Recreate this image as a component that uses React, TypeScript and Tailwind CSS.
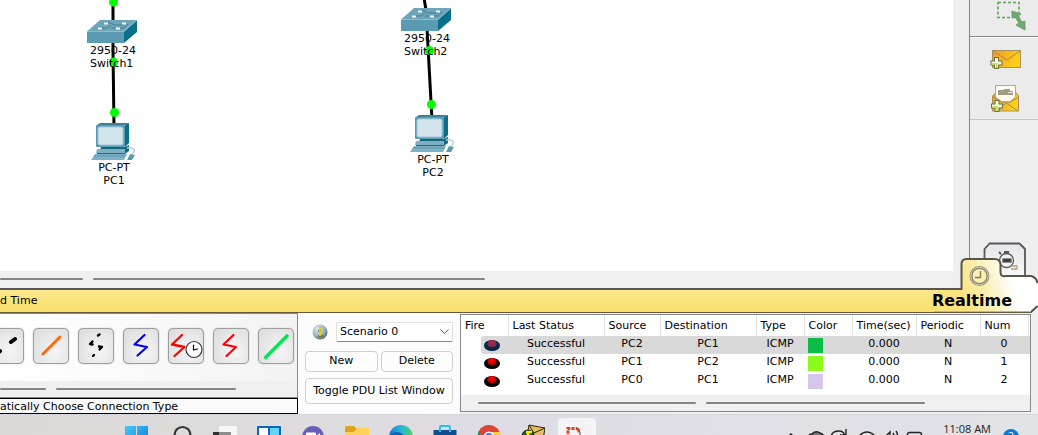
import type { ReactNode } from "react";

type Segment = { width: string };

function ScrollStrip({ lead, segments }: { lead: string; segments: Segment[] }) {
  return (
    <div className={`flex h-4 shrink-0 items-center gap-2.5 overflow-hidden bg-[#f0f0f0] ${lead}`}>
      {segments.map((s, i) => (
        <div key={i} className={`h-0.5 shrink-0 rounded-full bg-[#858585] ${s.width}`} />
      ))}
    </div>
  );
}

function SwitchIcon() {
  return (
    <svg width="50" height="25" viewBox="0 0 50 25" className="block">
      <path d="M0 12.500L13 1h37L37 12.500z" fill="#6fa5b9" />
      <path d="M0 12.500h37V24H0z" fill="#5b9ab3" />
      <path d="M37 12.500L50 1v12L37 24z" fill="#0b6f8a" />
      <path d="M0 12.500h37L50 1" fill="none" stroke="#8fbccb" strokeWidth="1" />
      <path d="M17 4h7l3 2h11M12 9h8l4-3M30 9h7l4-4M24 9l4 0" fill="none" stroke="#3f7f95" strokeWidth="1" />
      <path d="M17 4.500h4M11 9.500h4M29 9.500h4M35 4.500h4" fill="none" stroke="#f3fafc" strokeWidth="2" />
    </svg>
  );
}

function PcIcon() {
  return (
    <svg width="46" height="38" viewBox="0 0 46 38" className="block">
      <path d="M6 2L9 0h29l-4 2z" fill="#3b8198" />
      <path d="M34 2l4-2v20l-4 4z" fill="#0b6f8a" />
      <rect x="5" y="2" width="29" height="22" rx="1" fill="#5b9ab3" />
      <rect x="7" y="4" width="25" height="18" rx="2" fill="#d3e4ec" stroke="#a6cad8" />
      <path d="M10 24h24l4-2v2l-4 3H9z" fill="#19647c" />
      <path d="M6 26h28v4H5z" fill="#7db0c2" />
      <path d="M34 26l4-2v4l-4 3H6v-1h28z" fill="#0b6f8a" />
      <path d="M4 31h32l-3 6H0z" fill="#7fb0c3" />
      <path d="M3 33h31" stroke="#5b9ab3" />
      <path d="M36 25c8-1 9 3 5 6" fill="none" stroke="#b4ced9" strokeWidth="1.500" />
      <path d="M39 31l5 1-3 5h-5z" fill="#5b9ab3" />
    </svg>
  );
}

function SwitchNode({ place, name }: { place: string; name: string }) {
  return (
    <div className={`absolute flex w-[50px] flex-col leading-[13px] ${place}`}>
      <SwitchIcon />
      <span className="pl-[3px]">2950-24</span>
      <span className="pl-[3px]">{name}</span>
    </div>
  );
}

function PcNode({ place, name }: { place: string; name: string }) {
  return (
    <div className={`absolute flex w-[46px] flex-col text-center leading-[13px] ${place}`}>
      <PcIcon />
      <span>PC-PT</span>
      <span>{name}</span>
    </div>
  );
}

function Links() {
  return (
    <svg width="500" height="160" className="absolute left-0 top-0">
      <g stroke="#000" strokeWidth="3" fill="none">
        <path d="M113 0v50L114 128" />
        <path d="M424 -2L426 10L432 120" />
      </g>
      <g fill="#00ff00">
        <circle cx="113.500" cy="2" r="4.500" />
        <circle cx="113.500" cy="62" r="4.500" />
        <circle cx="114.500" cy="112.500" r="4.500" />
        <circle cx="429.500" cy="50.500" r="4.500" />
        <circle cx="431.500" cy="104.500" r="4.500" />
      </g>
    </svg>
  );
}

function Plus() {
  return (
    <>
      <path d="M12 9v12M6 15h12" stroke="#6b7040" strokeWidth="5" />
      <path d="M12 10v10M7 15h10" stroke="#f6f9d8" strokeWidth="3" />
      <path d="M12 15v5M7 16h5" stroke="#c0dc4a" strokeWidth="1.500" />
    </>
  );
}

function SideToolbar() {
  return (
    <aside className="flex w-[69px] shrink-0 flex-col border-l border-[#80808c] bg-[#efefef]">
      <div className="flex h-[37px] justify-center border-b border-[#8c8c8c] bg-[#ebebeb]">
        <button aria-label="Resize shape" className="flex h-8 w-10">
          <svg width="40" height="32" viewBox="0 0 40 32" className="overflow-visible">
            <rect x="14" y="2.500" width="21" height="15" fill="none" stroke="#5ea351" strokeWidth="1.600" strokeDasharray="3 2" />
            <path d="M28 11l9 3-3 2 4 6 3-1v9l-9-5 3-2-4-6-3 1z" fill="#6bab6b" stroke="#7b9a78" />
          </svg>
        </button>
      </div>
      <div className="flex h-[83px] flex-col items-center border-y border-b-[#c4c4c4] border-t-white bg-[#ebebeb] pt-[9px]">
        <button aria-label="Add simple PDU" className="h-9 w-10">
          <svg width="40" height="36" viewBox="0 0 40 36">
            <defs>
              <linearGradient id="mail" x1="0" x2="1" y1="0" y2="0.300">
                <stop offset="0" stopColor="#f39a25" />
                <stop offset="1" stopColor="#fcd116" />
              </linearGradient>
            </defs>
            <rect x="8.500" y="3.500" width="28" height="17" fill="url(#mail)" stroke="#a69060" />
            <path d="M9 4l14 9L36 4" fill="none" stroke="#a88846" />
            <g transform="translate(0.500 1)"><Plus /></g>
          </svg>
        </button>
        <button aria-label="Add complex PDU" className="h-9 w-10">
          <svg width="40" height="36" viewBox="0 0 40 36">
            <path d="M8.500 13l4-4h19l3 4v15h-26z" fill="url(#mail)" stroke="#a69060" />
            <path d="M11.500 2.500h20V14l-6 5h-8l-6-5z" fill="#fffdf0" stroke="#b3aa8e" />
            <path d="M14 7h6V6h6v2h3v4H14z" fill="#a39b85" />
            <path d="M24 9.500h5" stroke="#e9e3cf" />
            <path d="M9 14l9 5h8l9-5M14 28l8-8 12 8" fill="none" stroke="#a88846" />
            <g transform="translate(1 8)"><Plus /></g>
          </svg>
        </button>
      </div>
    </aside>
  );
}

function ModeTabs() {
  return (
    <svg width="104" height="73" viewBox="0 0 104 73" className="absolute -bottom-px right-0">
      <defs>
        <linearGradient id="tab" gradientUnits="userSpaceOnUse" x1="24" y1="50" x2="76" y2="34">
          <stop offset="0" stopColor="#fae37c" />
          <stop offset="0.500" stopColor="#fcefb5" />
          <stop offset="1" stopColor="#ffffff" />
        </linearGradient>
        <linearGradient id="back" x1="0" x2="0" y1="0" y2="1">
          <stop offset="0" stopColor="#e6e6e6" />
          <stop offset="1" stopColor="#fafafa" />
        </linearGradient>
        <linearGradient id="fade" x1="0" x2="1" y1="0" y2="0">
          <stop offset="0" stopColor="#fae37c" stopOpacity="0" />
          <stop offset="0.250" stopColor="#fae37c" />
        </linearGradient>
      </defs>
      <path d="M94 48h10v25H94z" fill="#efefef" />
      <path d="M50.500 40V9l5-5.500h30l5.500 5.500v30z" fill="url(#back)" stroke="#57575b" strokeWidth="1.800" strokeLinejoin="round" />
      <g fill="none" stroke="#55565a" strokeWidth="1.300">
        <circle cx="72.500" cy="20.500" r="7" fill="#f4f4f4" />
        <path d="M70 12h5M67 14l-2-2" strokeWidth="2" />
        <rect x="69" y="19" width="8" height="3" fill="#333" />
        <path d="M77 29h6v-3h-6" stroke="#a9a57b" />
      </g>
      <path d="M0 49H28V72H0z" fill="url(#fade)" />
      <path
        d="M27 49.500V24q0-5 5-5H60.500q6 0 6 6v7q0 5 5 4H97q6 1 6.500 8V66l-7 6.500H27z"
        fill="url(#tab)"
      />
      <path
        d="M0 49H27.500V24q0-5 5-5H60.500q6 0 6 6v7q0 5 5 4H97q5 1 6.500 7M103.500 66l-7 6.500"
        fill="none"
        stroke="#57544b"
        strokeWidth="2"
      />
      <path d="M0 71.500h97" stroke="#dcb93e" strokeWidth="1" />
      <path d="M0 72.500h97" stroke="#67593a" strokeWidth="1" />
      <circle cx="45.500" cy="36" r="8.500" fill="#fcefb0" stroke="#85816f" strokeWidth="3" />
      <circle cx="45.500" cy="36" r="8.800" fill="none" stroke="#ddd8bc" strokeWidth="1" />
      <path d="M46.500 31v6.500H41" fill="none" stroke="#827c60" strokeWidth="1.400" />
    </svg>
  );
}

function ConnectionButton({ label, children }: { label: string; children: ReactNode }) {
  return (
    <button
      aria-label={label}
      className="size-9 shrink-0 rounded-[5px] border border-[#9d9d9d] bg-radial-[at_60%_65%] from-[#f6f6f6] to-[#dadada] shadow-[0_0_1px_#888]"
    >
      <svg width="34" height="34" viewBox="1 1 34 34" fill="none" strokeLinecap="round" strokeLinejoin="round">
        {children}
      </svg>
    </button>
  );
}

function ConnectionPanel() {
  return (
    <section className="flex w-[298px] shrink-0 flex-col">
      <div className="flex flex-1 flex-col border-r border-y border-[#86868b]">
        <div className="flex flex-1 items-center justify-end gap-[9px] overflow-hidden bg-linear-to-r from-white to-[#f3f3f3] pb-[3px] pr-[3px]">
          <ConnectionButton label="Copper cross-over">
            <path d="M23 14l4-3M9 26l3-3" stroke="#000" strokeWidth="4" />
          </ConnectionButton>
          <ConnectionButton label="Fiber">
            <path d="M10 26L27 9" stroke="#ff6a0a" strokeWidth="3" />
          </ConnectionButton>
          <ConnectionButton label="Phone">
            <path d="M20 7.500l1.500-1M14.500 13.500l-2.500 2.500 2.500 0.500M21 18.500l3 0.500-2.500 2.500M15 28l1-1" stroke="#000" strokeWidth="2.400" />
          </ConnectionButton>
          <ConnectionButton label="Coaxial">
            <path d="M21.500 7L11.500 16.500l12.500 2.500-9.500 8.500" stroke="#0000ff" strokeWidth="2.200" />
          </ConnectionButton>
          <ConnectionButton label="Serial DCE">
            <path d="M14 7L4 16.500l12.500 2.500L6.500 28" stroke="#ff0000" strokeWidth="2.300" />
            <circle cx="26" cy="21.500" r="8" fill="#fff" stroke="#333" strokeWidth="1.200" />
            <path d="M25.500 17v5l4-1" stroke="#000" strokeWidth="1.200" />
          </ConnectionButton>
          <ConnectionButton label="Serial DTE">
            <path d="M20.500 7L10.500 16.500l12.500 2.500-9.500 9" stroke="#ff0000" strokeWidth="2.200" />
          </ConnectionButton>
          <ConnectionButton label="Octal">
            <path d="M7.500 29.500L29 8" stroke="#10e060" strokeWidth="3.600" />
          </ConnectionButton>
        </div>
        <ScrollStrip lead="" segments={[{ width: "w-[46px]" }, { width: "w-[180px]" }]} />
      </div>
      <div className="h-4 overflow-hidden whitespace-nowrap border border-l-0 border-black bg-[#fafafa] leading-4">
        atically Choose Connection Type
      </div>
    </section>
  );
}

const CONTROL = "rounded-[4px] border border-[#cfcfcf] bg-[#fdfdfd]";

function ScenarioPanel() {
  return (
    <section className="flex w-[162px] shrink-0 flex-col bg-[#fcfcfc] px-[7px] pt-[9px]">
      <div className="flex items-center gap-2">
        <button aria-label="Scenario description" className="ml-[7px] size-4 shrink-0">
          <svg width="16" height="16" viewBox="0 0 16 16">
            <defs>
              <radialGradient id="info" cx="0.350" cy="0.300" r="0.750">
                <stop offset="0" stopColor="#dbe7ea" />
                <stop offset="0.600" stopColor="#9fb4bd" />
                <stop offset="1" stopColor="#4b6876" />
              </radialGradient>
            </defs>
            <circle cx="8" cy="8" r="7.500" fill="url(#info)" />
            <path d="M6 7h2v5M6 12h5M8 3.500v2" stroke="#7a7a3a" strokeWidth="2" fill="none" />
            <path d="M7 7h1v5M8 3.500v2" stroke="#f4e800" strokeWidth="1.600" fill="none" />
          </svg>
        </button>
        <div className="relative flex-1">
          <select
            aria-label="Scenario"
            className="block h-5 w-full appearance-none rounded-[2px] border border-[#e0e0e0] border-b-[#868686] bg-white pl-[3px] text-[11px] leading-4"
          >
            <option>Scenario 0</option>
          </select>
          <svg width="9" height="6" viewBox="0 0 9 6" className="pointer-events-none absolute right-1 top-[7px]">
            <path d="M0.500 0.500l4 4 4-4" fill="none" stroke="#555" />
          </svg>
        </div>
      </div>
      <div className="mt-[9px] flex gap-[3px]">
        <button className={`h-[21px] flex-1 ${CONTROL}`}>New</button>
        <button className={`h-[21px] flex-1 ${CONTROL}`}>Delete</button>
      </div>
      <button className={`mt-1.5 h-[26px] whitespace-nowrap ${CONTROL}`}>Toggle PDU List Window</button>
    </section>
  );
}

const COLUMNS = [
  { name: "Fire", width: "w-[47px]" },
  { name: "Last Status", width: "w-24" },
  { name: "Source", width: "w-14" },
  { name: "Destination", width: "w-24" },
  { name: "Type", width: "w-12" },
  { name: "Color", width: "w-12" },
  { name: "Time(sec)", width: "w-16" },
  { name: "Periodic", width: "w-16" },
  { name: "Num", width: "w-12" },
];

const PDUS = [
  { source: "PC2", destination: "PC1", color: "bg-[#0dbb48]", selected: true },
  { source: "PC1", destination: "PC2", color: "bg-[#8bf91c]", selected: false },
  { source: "PC0", destination: "PC1", color: "bg-[#d8c5ea]", selected: false },
];

function PduTable() {
  return (
    <section className="mb-0.5 mr-[7px] mt-px flex min-w-0 flex-1 flex-col justify-between overflow-hidden border border-[#828790] bg-white">
      <table className="w-full table-fixed border-collapse">
        <thead>
          <tr className="h-[21px]">
            {COLUMNS.map((c) => (
              <th key={c.name} className={`whitespace-nowrap border-r border-[#e2e2e2] p-0 pl-1 pt-0.5 text-left font-normal ${c.width}`}>
                {c.name}
              </th>
            ))}
            <th className="p-0" />
          </tr>
        </thead>
        <tbody>
          {PDUS.map((p, i) => {
            const tone = p.selected ? "bg-[#d9d9d9]" : "";
            return (
              <tr key={i} className="h-[18px] text-center leading-4">
                <td className="p-0 pl-5">
                  <div className={`flex h-[18px] items-end rounded-l-[3px] pb-[3px] pl-[3px] ${tone}`}>
                    <button aria-label="Fire" className="h-3 w-4">
                      <svg width="16" height="12" viewBox="0 0 16 12">
                        <ellipse cx="8" cy="6.500" rx="8" ry="5.500" fill={p.selected ? "#08284a" : "#080404"} />
                        <ellipse cx="8" cy="4.500" rx="4.500" ry="3.500" fill={p.selected ? "#8c2a4a" : "#cf0000"} />
                        <ellipse cx="8" cy="3.500" rx="2.500" ry="2" fill={p.selected ? "#a52c4c" : "#f40505"} />
                      </svg>
                    </button>
                  </div>
                </td>
                <td className={`p-0 align-top ${tone}`}>Successful</td>
                <td className={`p-0 align-top ${tone}`}>{p.source}</td>
                <td className={`p-0 align-top ${tone}`}>{p.destination}</td>
                <td className={`p-0 align-top ${tone}`}>ICMP</td>
                <td className={`p-0 pl-1 pt-0.5 align-top ${tone}`}>
                  <div className={`size-[15px] ${p.color}`} />
                </td>
                <td className={`p-0 align-top ${tone}`}>0.000</td>
                <td className={`p-0 align-top ${tone}`}>N</td>
                <td className={`p-0 align-top ${tone}`}>{i}</td>
                <td className={`p-0 ${tone}`} />
              </tr>
            );
          })}
        </tbody>
      </table>
      <ScrollStrip lead="pl-[17px]" segments={[{ width: "w-[218px]" }, { width: "w-[219px]" }]} />
    </section>
  );
}

function TaskIcon({ label, children, active = false }: { label: string; children: ReactNode; active?: boolean }) {
  return (
    <button
      aria-label={label}
      className={
        active
          ? "flex h-10 w-[38px] items-start rounded bg-[#f4f3f5] px-[7px] pt-1.5"
          : "flex h-10 w-[38px] items-start px-[7px] pt-1.5"
      }
    >
      <svg width="24" height="24" viewBox="0 0 24 24" fill="none" className="block">
        {children}
      </svg>
    </button>
  );
}

function Taskbar() {
  return (
    <footer className="flex h-[21px] shrink-0 justify-between overflow-hidden border-t border-[#d5d4dc] bg-linear-to-r from-[#dbdad6] via-[#dfdde4] to-[#e1e3e7] pt-[3px]">
      <div className="flex gap-1.5 pl-[118px]">
        <TaskIcon label="Start">
          <defs>
            <linearGradient id="win" x1="0" x2="1" y1="0" y2="1">
              <stop offset="0" stopColor="#45c8fb" />
              <stop offset="1" stopColor="#0a78d4" />
            </linearGradient>
          </defs>
          <path d="M0 2h11v11H0zM12 2h11v11H12zM0 14h11v10H0zM12 14h11v10H12z" fill="url(#win)" />
        </TaskIcon>
        <TaskIcon label="Search">
          <circle cx="13.500" cy="11" r="8" stroke="#333" strokeWidth="2.200" />
        </TaskIcon>
        <TaskIcon label="Task view">
          <rect x="6" y="2" width="18" height="14" fill="#f7f7f7" />
          <rect x="0" y="8" width="18" height="14" fill="#8d8d8d" />
          <path d="M0 8h6v14H0z" fill="#333" />
        </TaskIcon>
        <TaskIcon label="Widgets">
          <rect x="0" y="2" width="24" height="22" rx="1" fill="#0b67b8" />
          <path d="M2 4h9v18H2z" fill="#fff" />
          <path d="M13 4h9v9h-9z" fill="#62d4fb" />
        </TaskIcon>
        <TaskIcon label="Chat">
          <circle cx="12" cy="13" r="11" fill="#6860b8" />
          <rect x="5" y="8.500" width="10" height="9" rx="1" fill="#fff" />
          <path d="M15 12l4-3v8l-4-3z" fill="#fff" />
        </TaskIcon>
        <TaskIcon label="File Explorer">
          <path d="M0 4q0-2 2-2h7l3 3h12v17H0z" fill="#e0a21a" />
          <path d="M0 8h9l3-4h12v18H0z" fill="#ffd25b" />
        </TaskIcon>
        <TaskIcon label="Edge">
          <defs>
            <linearGradient id="edge" x1="0" x2="1">
              <stop offset="0" stopColor="#1679ce" />
              <stop offset="0.500" stopColor="#25b9d4" />
              <stop offset="1" stopColor="#54cf5c" />
            </linearGradient>
          </defs>
          <circle cx="12" cy="13" r="12" fill="url(#edge)" />
          <path d="M0 13c2-6 12-7 15-1-5-1-6 3-5 10H4z" fill="#1360b4" />
        </TaskIcon>
        <TaskIcon label="Store">
          <path d="M7 8V3q0-1 1-1h8q1 0 1 1v5" stroke="#2bbcf2" strokeWidth="2" />
          <rect x="0.500" y="6" width="23" height="18" fill="#0f4f90" />
          <path d="M7 6v2M17 6v2" stroke="#2bbcf2" strokeWidth="2" />
        </TaskIcon>
        <TaskIcon label="Chrome">
          <circle cx="12" cy="12.500" r="11.500" fill="#db4437" />
          <path d="M2 7l8 16H6Q-2 15 2 7z" fill="#0f9d58" />
          <path d="M12 8h11q2 10-9 16z" fill="#ffcd40" />
          <circle cx="12" cy="13" r="5.500" fill="#fff" />
          <circle cx="12" cy="13" r="4.200" fill="#4285f4" />
        </TaskIcon>
        <TaskIcon label="Packet Tracer">
          <path d="M8 1l16 3-2 12-16-3z" fill="#e3bd62" stroke="#2d2413" />
          <path d="M8 1l5 8L24 4" stroke="#2d2413" />
          <circle cx="7" cy="12" r="6" fill="#1d5d27" stroke="#111" />
          <path d="M5 8h6M7 8v6" stroke="#ffe600" strokeWidth="2.500" />
        </TaskIcon>
        <TaskIcon label="Snipping Tool" active>
          <path d="M3 22V4.500h9" stroke="#d1431f" strokeWidth="3" strokeDasharray="3 1.200" />
          <path d="M11 4.500q3 0 3 4" stroke="#d1431f" strokeWidth="2.500" />
          <path d="M15 8v14" stroke="#90949b" strokeWidth="2" />
        </TaskIcon>
      </div>
      <div className="flex items-start pr-[19px]">
        <svg width="140" height="24" viewBox="788 418 140 24" fill="none" stroke="#222" strokeWidth="1.400">
          <path d="M789 438l4-4 4 4" />
          <path d="M810 438q0-4 4-4 3-4 8-1 4 1 4 5z" fill="#777" />
          <path d="M833 438q0-7 8-7 4 0 6 4M848 429v6h-6" />
          <path d="M861 436q8-8 16 0M865 438q4-4 8 0" />
          <path d="M885 436h3l4-4v8M895 433q2 3 0 6M898 431q3 4 0 8" />
          <rect x="909.500" y="432.500" width="14" height="9" rx="2" />
        </svg>
        <div className="ml-[17px] mt-1 whitespace-nowrap font-['Open_Sans',sans-serif] text-[11px] leading-[14px] text-[#1c1c1c]">11:08 AM</div>
        <div className="ml-3 mt-[11px] flex size-4 justify-center rounded-full bg-[#0a78d4] text-[9px] leading-[14px] text-white">2</div>
      </div>
    </footer>
  );
}

export default function App() {
  return (
    <div className="flex h-screen flex-col overflow-hidden bg-[#efefef] font-['DejaVu_Sans',sans-serif] text-[11px] text-black">
      <div className="flex min-h-0 flex-1">
        <main className="flex min-w-0 flex-1 flex-col pb-px">
          <div className="relative min-h-0 flex-1 overflow-hidden bg-white">
            <Links />
            <SwitchNode place="left-[87px] top-[19px]" name="Switch1" />
            <PcNode place="left-[91px] top-[123px]" name="PC1" />
            <SwitchNode place="left-[401px] top-[7px]" name="Switch2" />
            <PcNode place="left-[410px] top-[115px]" name="PC2" />
          </div>
          <ScrollStrip lead="" segments={[{ width: "w-[83px]" }, { width: "w-[392px]" }]} />
        </main>
        <div className="w-4 shrink-0" />
        <SideToolbar />
      </div>

      <div className="relative flex h-[25px] shrink-0 items-center justify-between border-b border-t-2 border-b-[#67593a] border-t-[#57575b] bg-linear-to-b from-[#fce88c] to-[#f9df6c]">
        <ModeTabs />
        <span className="whitespace-pre pt-px">d Time</span>
        <button className="relative mr-[26px] text-base font-bold leading-5">Realtime</button>
      </div>

      <div className="flex h-[101px] shrink-0">
        <ConnectionPanel />
        <ScenarioPanel />
        <PduTable />
      </div>

      <Taskbar />
    </div>
  );
}
